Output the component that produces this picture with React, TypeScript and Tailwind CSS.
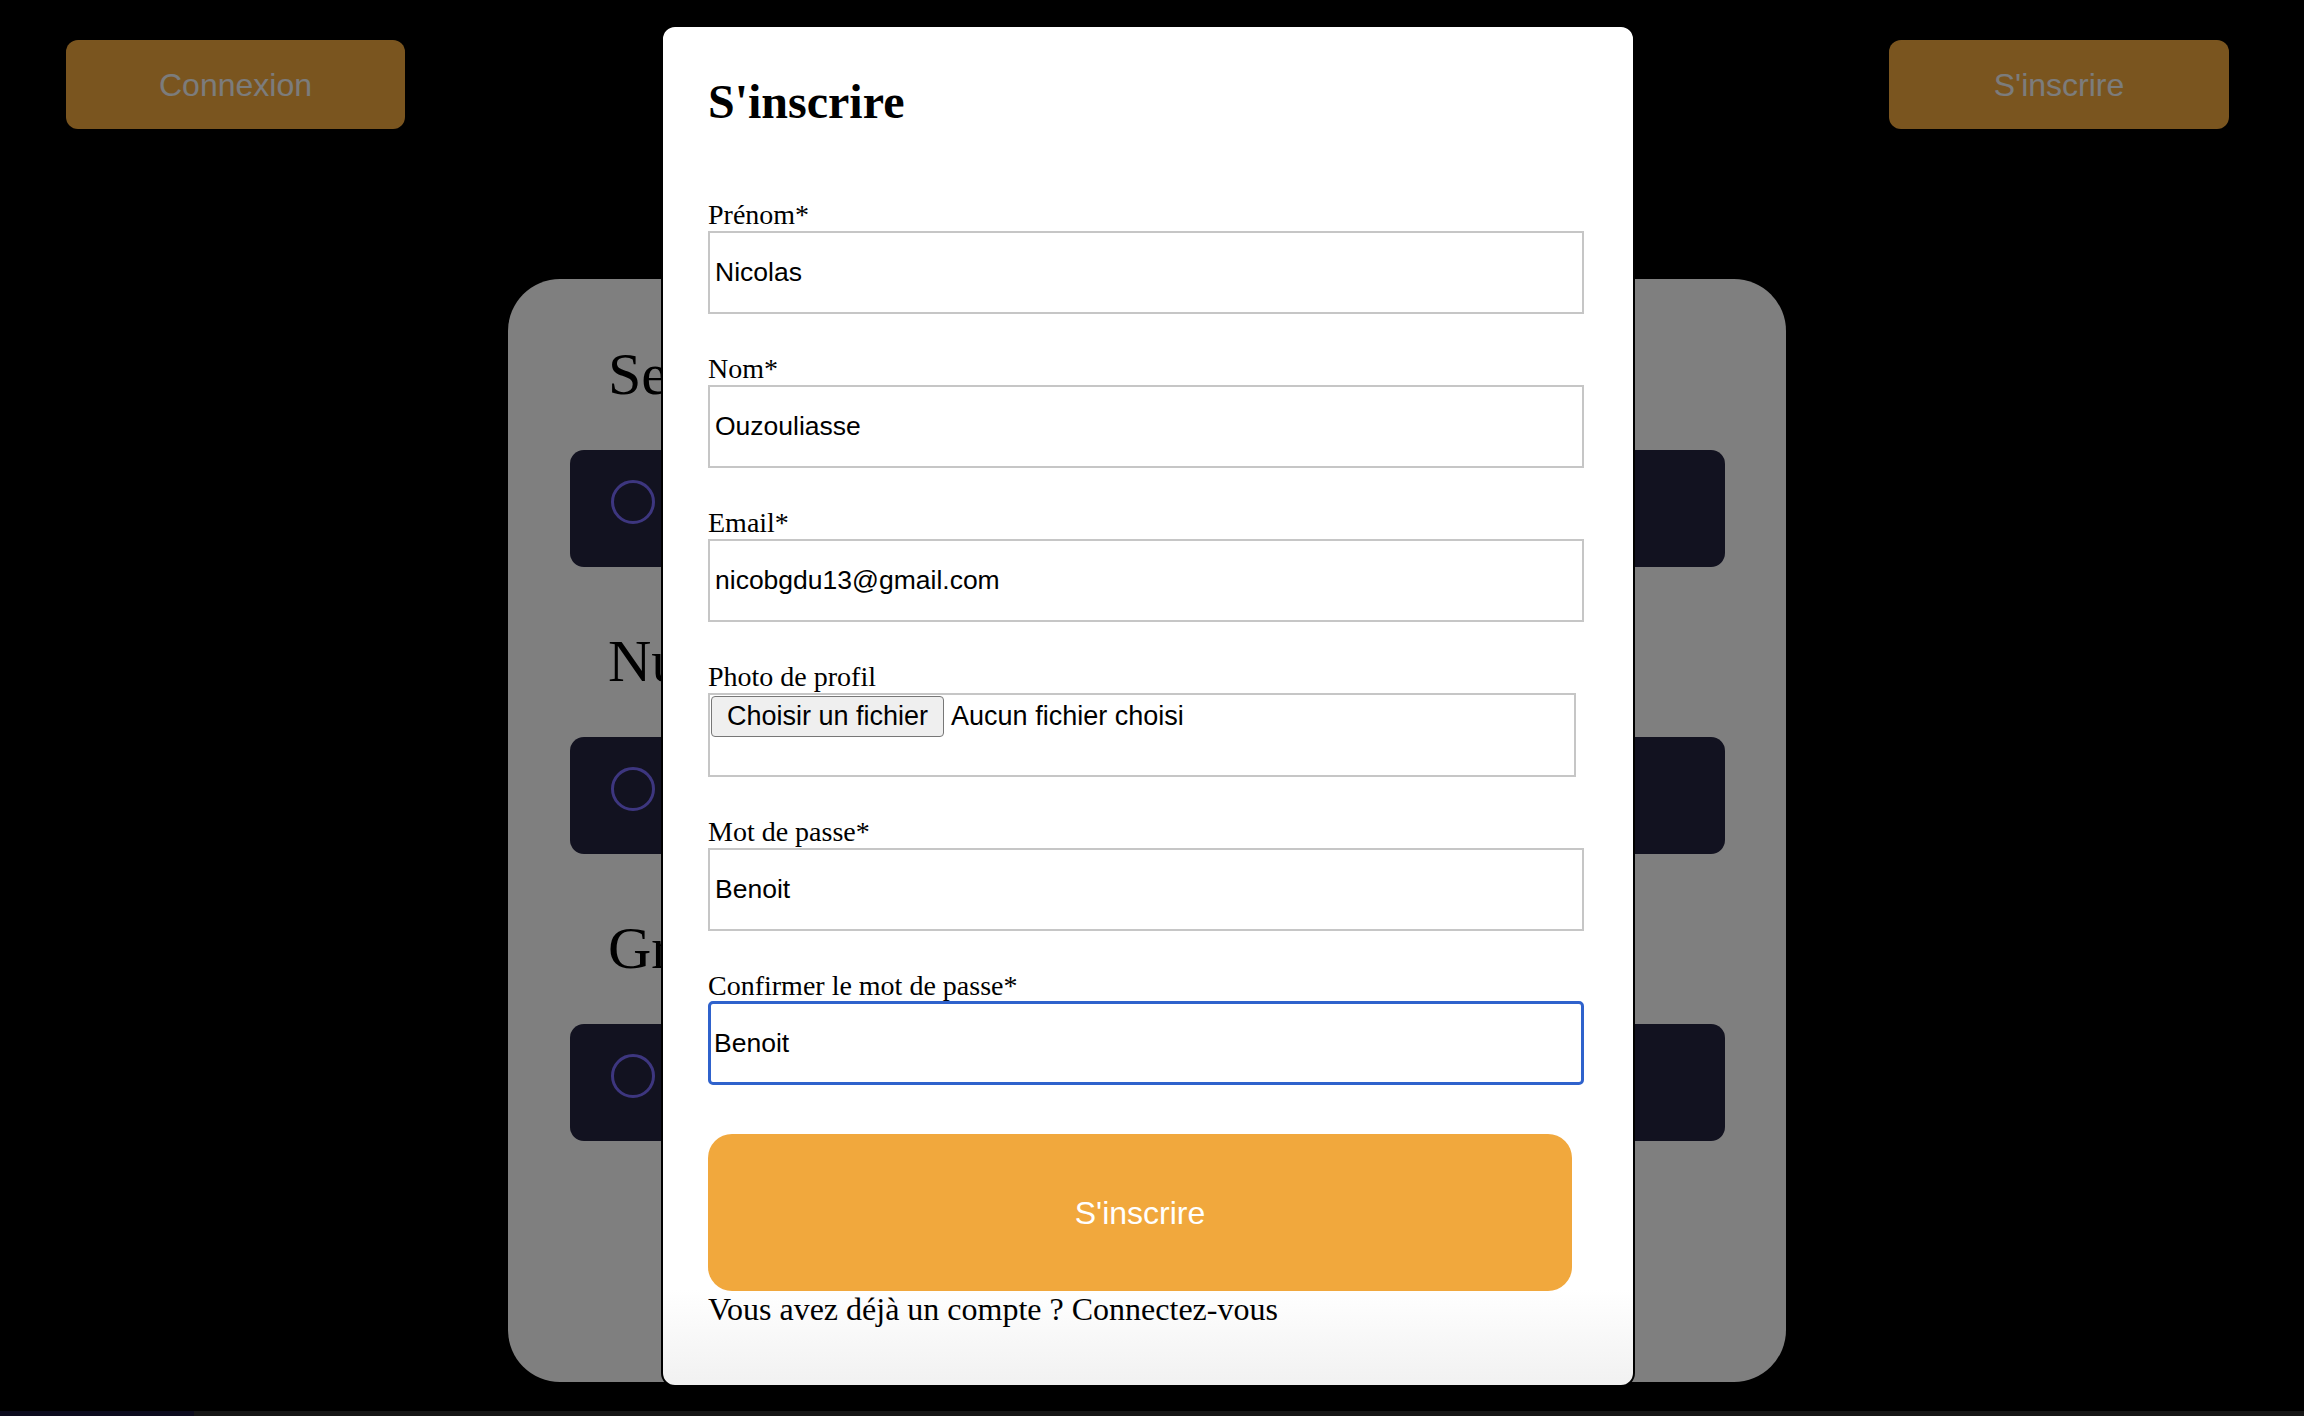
import React from 'react';

const sections = ["Services", "Numéros", "Groupes"];

const fields = [
  { label: "Prénom*", value: "Nicolas" },
  { label: "Nom*", value: "Ouzouliasse" },
  { label: "Email*", value: "nicobgdu13@gmail.com" },
];

const Field = ({ label, value }: { label: string; value: string }) => (
  <div className="flex flex-col mb-[39px]">
    <label className="text-[28px] leading-[32px] text-black">{label}</label>
    <input
      readOnly
      value={value}
      className="w-[876px] h-[83px] px-[5px] border-2 border-[#c6c6c6] outline-none text-[26.5px] font-['Liberation_Sans'] text-black bg-white"
    />
  </div>
);

const App = () => {
  return (
    <div className="relative h-[1416px] w-full overflow-hidden bg-black font-['Liberation_Sans',sans-serif]">
      {/* page behind the modal */}
      <div className="flex justify-between pl-[66px] pr-[75px] pt-[40px]">
        <button className="w-[339px] h-[89px] rounded-[12px] bg-[#f4aa3e] text-[#f8f8f8] text-[32px]">Connexion</button>
        <button className="w-[340px] h-[89px] rounded-[12px] bg-[#f4aa3e] text-[#f8f8f8] text-[32px]">S'inscrire</button>
      </div>

      <div className="ml-[508px] mt-[150px] w-[1278px] h-[1103px] rounded-[52px] bg-white pt-[61px] px-[62px]">
        {sections.map((title) => (
          <div key={title} className="mb-[60px]">
            <h2 className="ml-[38px] mb-[41px] text-[60px] leading-[69px] font-['Liberation_Serif',serif] text-black">{title}</h2>
            <div className="h-[117px] w-[1155px] rounded-[14px] bg-[#242440] pl-[41px] pt-[30px]">
              <div className="w-[44px] h-[44px] rounded-full border-[3px] border-[#7a6cff]" />
            </div>
          </div>
        ))}
      </div>

      <div className="mt-[29px] flex h-[5px]">
        <div className="w-[194px] bg-[#18163a]" />
        <div className="flex-1 bg-[#2c2c2c]" />
      </div>

      {/* overlay */}
      <div className="absolute inset-0 bg-black/50" />

      {/* modal */}
      <div className="absolute left-[661px] top-[25px] w-[974px] h-[1362px] rounded-[14px] border-2 border-black bg-linear-to-b from-white from-[93%] to-[#f1f1f1] pl-[45px] pt-[47px] font-['Liberation_Serif',serif]">
        <h1 className="text-[48px] leading-[55px] font-bold text-black mb-[70px]">S'inscrire</h1>

        {fields.map((f) => (
          <Field key={f.label} label={f.label} value={f.value} />
        ))}

        <div className="flex flex-col mb-[39px]">
          <label className="text-[28px] leading-[32px] text-black">Photo de profil</label>
          <div className="w-[868px] h-[84px] border-2 border-[#c6c6c6] bg-white flex items-start pt-[1px] pl-[1px] font-['Liberation_Sans'] text-[27px] text-black">
            <span className="h-[41px] px-[15px] flex items-center rounded-[4px] border-[1.5px] border-[#777] bg-[#efefef]">Choisir un fichier</span>
            <span className="ml-[7px] h-[41px] flex items-center">Aucun fichier choisi</span>
          </div>
        </div>

        <Field label="Mot de passe*" value="Benoit" />

        <div className="flex flex-col">
          <label className="text-[28px] leading-[31px] text-black">Confirmer le mot de passe*</label>
          <input
            readOnly
            value="Benoit"
            className="w-[876px] h-[84px] px-[3px] border-[3px] border-[#2f62cc] rounded-[5px] outline-none text-[26.5px] font-['Liberation_Sans'] text-black bg-white"
          />
        </div>

        <button className="mt-[49px] w-[864px] h-[157px] rounded-[24px] bg-[#f1a83d] text-white text-[32px] font-['Liberation_Sans']">
          S'inscrire
        </button>
        <p className="mt-[0px] text-[32px] leading-[36px] text-black">Vous avez déjà un compte ? Connectez-vous</p>
      </div>
    </div>
  );
};

export default App;
